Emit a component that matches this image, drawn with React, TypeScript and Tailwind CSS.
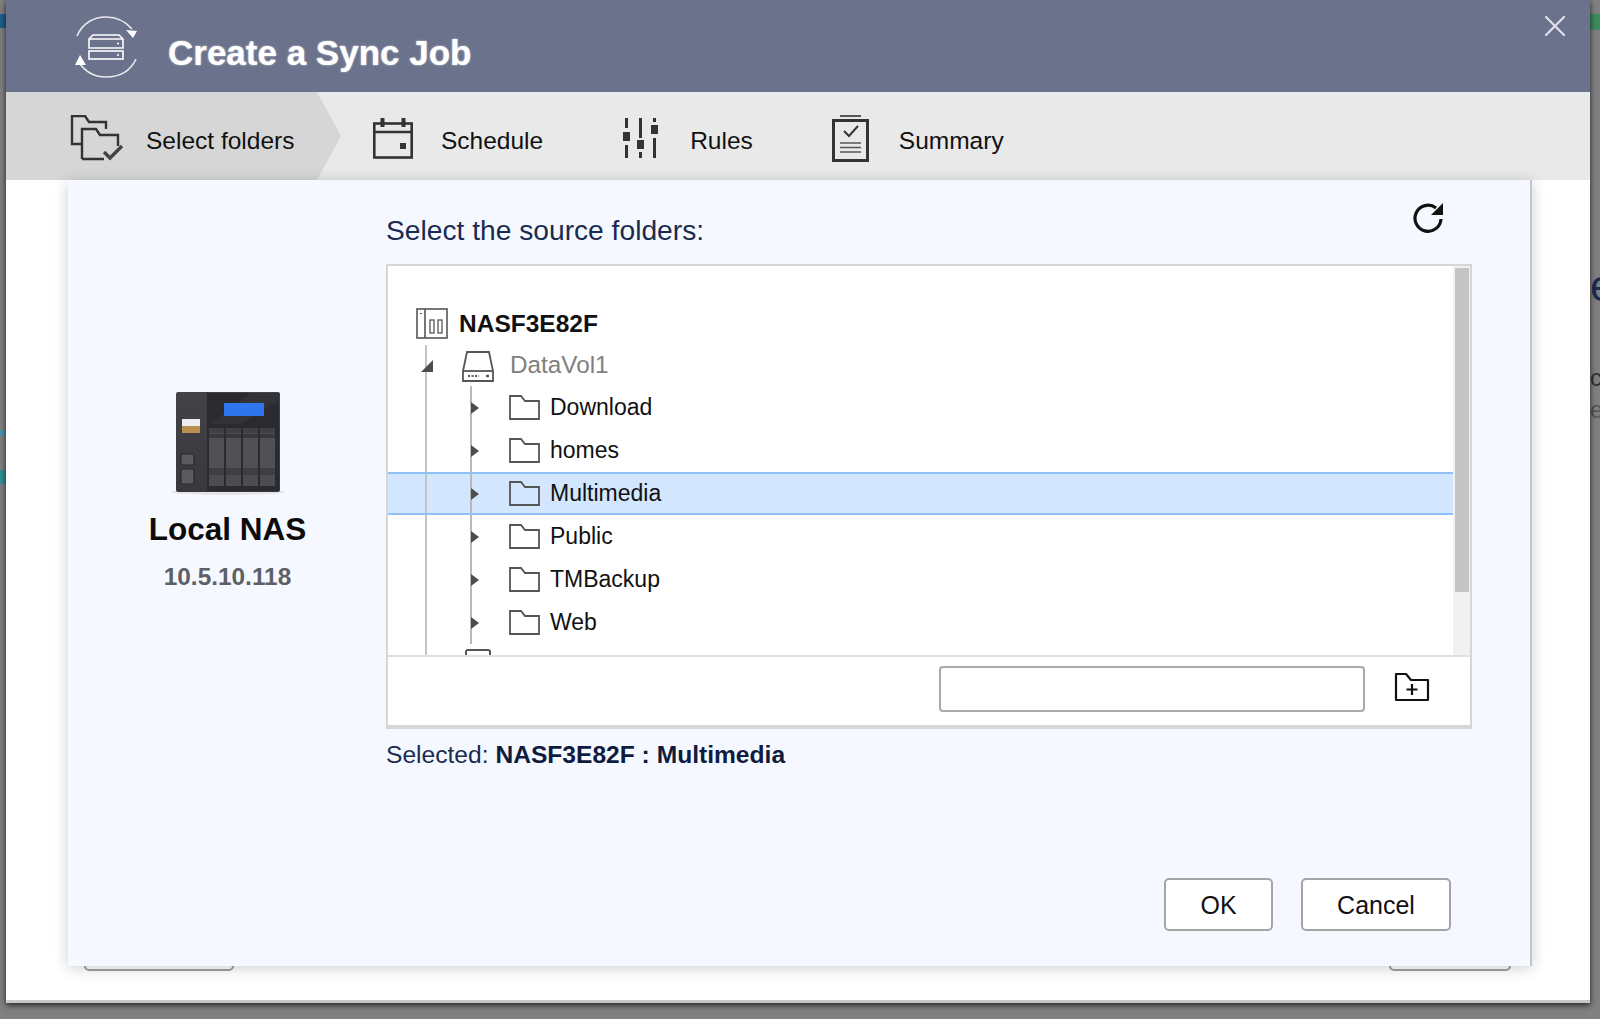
import { X } from "lucide-react";

const folders = ["Download", "homes", "Multimedia", "Public", "TMBackup", "Web"];
const selectedFolder = "Multimedia";

function SyncLogo() {
  return (
    <svg width="62" height="62" viewBox="0 0 62 62" fill="none" stroke="#fff" strokeWidth="1.6" className="mt-[2px] shrink-0">
      <path d="M2 20C8 6 20 1 31 1c11 0 20 5 26 12" strokeOpacity="0.85" />
      <path d="M58 22l-7-8 11 1z" fill="#fff" stroke="none" />
      <path d="M61 43C55 56 43 61 31 61 20 61 11 56 5 48" strokeOpacity="0.85" />
      <path d="M5 39l6 10-11 0z" fill="#fff" stroke="none" />
      <path d="M14 23l4-4h26l4 4v9H14z" />
      <path d="M14 23h34" />
      <rect x="14" y="35" width="34" height="8" />
      <path d="M42 27.500h2M42 39h2" />
    </svg>
  );
}

function SelectFoldersIcon() {
  return (
    <svg width="54" height="46" viewBox="0 0 54 46" fill="none" stroke="#333" strokeWidth="2.4" className="shrink-0">
      <path d="M12 29H2V1h13l4 6h17v7" />
      <path d="M12 44V14h14l4 6h18v11" />
      <path d="M12 44h22" />
      <path d="M34 37l6 6 12-12" strokeWidth="3.4" stroke="#444" />
    </svg>
  );
}

function ScheduleIcon() {
  return (
    <svg width="40" height="41" viewBox="0 0 40 41" fill="none" stroke="#333" strokeWidth="2.6" className="shrink-0">
      <rect x="1.300" y="5.500" width="37.400" height="34" />
      <path d="M1 14h38" />
      <path d="M9.500 0v9M30.500 0v9" strokeWidth="4" />
      <rect x="27" y="25" width="6" height="6" fill="#333" stroke="none" />
    </svg>
  );
}

function RulesIcon() {
  return (
    <svg width="37" height="40" viewBox="0 0 37 40" fill="#333" className="shrink-0">
      <rect x="2" y="0" width="3" height="10" />
      <rect x="0" y="14" width="7" height="9" />
      <rect x="2" y="27" width="3" height="13" />
      <rect x="16" y="0" width="3" height="20" />
      <rect x="14" y="22" width="7" height="9" />
      <rect x="16" y="34" width="3" height="6" />
      <rect x="30" y="0" width="3" height="4" />
      <rect x="28" y="7" width="7" height="9" />
      <rect x="30" y="20" width="3" height="20" />
    </svg>
  );
}

function SummaryIcon() {
  return (
    <svg width="37" height="47" viewBox="0 0 37 47" fill="none" stroke="#333" className="shrink-0">
      <path d="M8 1h21" strokeWidth="2" stroke="#555" />
      <rect x="1.500" y="5.500" width="34" height="40" strokeWidth="3" />
      <path d="M12 16l5 5 9-10" strokeWidth="2" />
      <path d="M8 28h21M8 32.500h21M8 37h21" strokeWidth="1.6" stroke="#555" />
    </svg>
  );
}

function RefreshIcon() {
  return (
    <svg width="32" height="32" viewBox="0 0 32 32" fill="none" className="shrink-0">
      <path d="M28 17a13 13 0 1 1-5-11" stroke="#111" strokeWidth="3.2" />
      <path d="M30 1v12H18z" fill="#111" />
    </svg>
  );
}

function NasServerIcon() {
  return (
    <svg width="32" height="32" viewBox="0 0 32 32" fill="none" stroke="#555" strokeWidth="1.6" className="shrink-0">
      <rect x="1" y="1" width="30" height="29" />
      <path d="M9 1v29" />
      <path d="M5 5v1" strokeWidth="2" />
      <rect x="14" y="12" width="4" height="13" strokeWidth="1.3" />
      <rect x="22" y="12" width="4" height="13" strokeWidth="1.3" />
    </svg>
  );
}

function DriveIcon() {
  return (
    <svg width="32" height="32" viewBox="0 0 32 32" fill="none" stroke="#555" strokeWidth="1.8" className="shrink-0">
      <path d="M1 21L5 2h22l4 19v10H1z" />
      <path d="M1 21h30" />
      <path d="M6 26h11" strokeDasharray="2 1.500" />
      <path d="M24 26h3" strokeWidth="2.400" />
    </svg>
  );
}

function FolderIcon() {
  return (
    <svg width="31" height="25" viewBox="0 0 31 25" fill="none" stroke="#555" strokeWidth="1.8" className="shrink-0">
      <path d="M1 24V1h11l4 5h14v18z" />
    </svg>
  );
}

function NewFolderIcon() {
  return (
    <svg width="36" height="30" viewBox="0 0 36 30" fill="none" stroke="#111" strokeWidth="2.2" className="shrink-0">
      <path d="M2 28V2h10l5 6h17v20z" strokeLinejoin="round" />
      <path d="M18 12v11M12.500 17.500h11" />
    </svg>
  );
}

function NasDevice() {
  return (
    <svg width="116" height="104" viewBox="0 0 116 104" className="shrink-0">
      <defs>
        <linearGradient id="nas-body" x1="0" y1="0" x2="0" y2="1">
          <stop offset="0" stopColor="#424248" />
          <stop offset="1" stopColor="#38383d" />
        </linearGradient>
      </defs>
      <ellipse cx="58" cy="100" rx="57" ry="3" fill="#e3e5e8" />
      <rect x="6" y="0" width="104" height="100" rx="2" fill="url(#nas-body)" />
      <path d="M37 1h71a1 1 0 0 1 1 1v97H37z" fill="#2a2a2f" />
      <path d="M80 1h28l1 1v7L70 32H40z" fill="#323237" />
      <rect x="54" y="11" width="40" height="13" fill="#2f76ee" />
      <rect x="12" y="27" width="18" height="7" fill="#eeeeec" />
      <rect x="12" y="34" width="18" height="7" fill="#b98e4e" />
      <rect x="11" y="62" width="13" height="11" rx="1.500" fill="#5a5a60" stroke="#29292d" strokeWidth="1.2" />
      <rect x="11" y="77" width="13" height="15" rx="1.500" fill="#5a5a60" stroke="#29292d" strokeWidth="1.2" />
      {[39, 56, 73, 90].map((x) => (
        <g key={x}>
          <rect x={x} y="36" width="15" height="58" fill="#4c4c52" />
          <rect x={x} y="36" width="15" height="5" fill="#3f3f44" />
          <rect x={x} y="46" width="15" height="30" fill="#505056" />
          <rect x={x} y="76" width="15" height="7" fill="#3e3e43" />
          <rect x={x} y="42" width="15" height="4" fill="#38383d" />
        </g>
      ))}
    </svg>
  );
}

function TreeRow({ name, selected }: { name: string; selected: boolean }) {
  return (
    <div
      className={
        selected
          ? "flex h-[43px] shrink-0 items-stretch border-y-2 border-y-[#8fc1f7] bg-[#d2e6fd]"
          : "flex h-[43px] shrink-0 items-stretch"
      }
    >
      <div className="w-[37px] shrink-0" />
      <div className="w-[45px] shrink-0 border-l-2 border-l-[#c4c4c4]" />
      <div className="flex w-[39px] shrink-0 items-center border-l-2 border-l-[#b9b9b9]">
        <span className="-ml-[1px] h-0 w-0 border-y-[6px] border-l-[8px] border-y-transparent border-l-[#4d4d4d]" />
      </div>
      <div className="flex items-center gap-[10px]">
        <FolderIcon />
        <span className="text-[23px] text-[#111]">{name}</span>
      </div>
    </div>
  );
}

function FolderTree() {
  return (
    <div className="flex h-[465px] w-[1086px] flex-col border-x-2 border-t-2 border-b-4 border-[#d6d6d6] bg-white">
      <div className="flex min-h-0 flex-1">
        <div className="flex min-w-0 flex-1 flex-col overflow-hidden pt-[37px]">
          <div className="flex h-[42px] shrink-0 items-center pl-[28px]">
            <NasServerIcon />
            <span className="ml-[11px] text-[24.500px] font-bold text-[#111]">NASF3E82F</span>
          </div>
          <div className="flex h-[41px] shrink-0 items-stretch">
            <div className="w-[37px] shrink-0" />
            <div className="relative flex items-center border-l-2 border-l-[#c4c4c4] pl-[35px]">
              <span className="absolute -left-[6px] top-[15px] h-0 w-0 border-b-[12px] border-l-[12px] border-b-[#4d4d4d] border-l-transparent" />
              <DriveIcon />
              <span className="ml-[16px] text-[24.300px] text-[#808080]">DataVol1</span>
            </div>
          </div>
          {folders.map((name) => (
            <TreeRow key={name} name={name} selected={name === selectedFolder} />
          ))}
          <div className="flex h-[16px] shrink-0 items-stretch">
            <div className="w-[37px] shrink-0" />
            <div className="w-[40px] shrink-0 border-l-2 border-l-[#c4c4c4]" />
            <div className="mt-[5px] h-[11px] w-[26px] rounded-t-[3px] border-x-2 border-t-2 border-[#555]" />
          </div>
        </div>
        <div className="w-[17px] shrink-0 bg-[#f1f1f1] pl-[2px] pt-[2px]">
          <div className="h-[324px] w-[14px] bg-[#c4c4c4]" />
        </div>
      </div>
      <div className="flex h-[70px] shrink-0 items-center border-t-2 border-t-[#e0e0e0] pb-[4px] pl-[551px]">
        <input className="h-[46px] w-[426px] rounded-[4px] border-2 border-[#a9a9a9] bg-white" />
        <span className="mb-[4px] ml-[29px] flex">
          <NewFolderIcon />
        </span>
      </div>
    </div>
  );
}

export default function App() {
  return (
    <div className="relative h-[1019px] w-[1600px] overflow-hidden bg-[#808082] [font-family:'Liberation_Sans',Arial,sans-serif]">
      {/* bits of the page behind the dialog */}
      <div className="absolute left-0 top-[14px] h-[14px] w-[6px] bg-[#1f5f8f]" />
      <div className="absolute left-0 top-[430px] h-[6px] w-[6px] bg-[#4f93ad]" />
      <div className="absolute left-0 top-[470px] h-[14px] w-[6px] bg-[#2f8f96]" />
      <div className="absolute right-0 top-[14px] h-[16px] w-[10px] bg-[#3f8a5f]" />
      <div className="absolute right-0 top-[262px] h-[170px] w-[10px] overflow-hidden">
        <span className="absolute left-0 top-[2px] text-[44px] leading-[44px] text-[#1c2b4f]">e</span>
        <span className="absolute left-0 top-[104px] text-[24px] leading-[24px] text-[#333]">c</span>
        <span className="absolute left-0 top-[136px] text-[24px] leading-[24px] text-[#555]">e</span>
      </div>

      <div className="relative ml-[6px] flex h-[1003px] w-[1584px] flex-col border-b-[3px] border-b-[#c8c8c8] bg-white shadow-[0_2px_6px_rgba(0,0,0,0.75)]">
        <header className="flex h-[92px] shrink-0 items-center bg-[#6b728c] pl-[69px]">
          <SyncLogo />
          <h1 className="ml-[31px] mt-[14px] text-[35px] font-bold text-white [text-shadow:0_0_2px_rgba(255,255,255,0.8)]">
            Create a Sync Job
          </h1>
          <X className="absolute right-[17px] top-[8px] h-[36px] w-[36px] text-[#dfe1e8]" strokeWidth={1.5} />
        </header>

        <nav className="flex h-[88px] shrink-0 items-center bg-[#e9e9e9] text-[24.500px] text-[#111]">
          <div className="flex h-full w-[335px] shrink-0 items-center bg-[#d6d6d6] pl-[64px] pt-[4px] [clip-path:polygon(0_0,311px_0,335px_50%,311px_100%,0_100%)]">
            <SelectFoldersIcon />
            <span className="ml-[22px] pt-[6px]">Select folders</span>
          </div>
          <div className="ml-[32px] flex items-center pt-[4px]">
            <ScheduleIcon />
            <span className="ml-[28px] pt-[6px]">Schedule</span>
          </div>
          <div className="ml-[80px] flex items-center pt-[4px]">
            <RulesIcon />
            <span className="ml-[30px] pt-[6px]">Rules</span>
          </div>
          <div className="ml-[79px] flex items-center pt-[4px]">
            <SummaryIcon />
            <span className="ml-[30px] pt-[6px]">Summary</span>
          </div>
        </nav>

        <div className="relative min-h-0 flex-1">
          {/* buttons of the page under the dialog */}
          <div className="absolute left-[78px] top-[770px] h-[21px] w-[150px] rounded-b-[5px] border-2 border-[#a0a0a0]" />
          <div className="absolute left-[1383px] top-[770px] h-[21px] w-[122px] rounded-b-[5px] border-2 border-[#a0a0a0]" />

          <main className="relative ml-[62px] flex h-[786px] w-[1464px] border-r-2 border-r-[#c2c6cf] bg-[#f5f8fe] shadow-[0_2px_14px_rgba(0,0,0,0.2)]">
            <section className="flex w-[318px] shrink-0 flex-col items-center pl-[1px] pt-[212px]">
              <NasDevice />
              <div className="mt-[11px] text-[31.500px] font-bold leading-[44px] text-[#0c0c0c]">Local NAS</div>
              <div className="mt-[10px] text-[24.400px] font-bold leading-[32px] text-[#5e6066]">10.5.10.118</div>
            </section>

            <section className="flex min-w-0 flex-1 flex-col">
              <div className="flex h-[84px] shrink-0 items-start justify-between">
                <h2 className="mt-[32px] text-[28.200px] leading-[36px] text-[#1a2b50]">Select the source folders:</h2>
                <span className="mr-[85px] mt-[22px]">
                  <RefreshIcon />
                </span>
              </div>
              <FolderTree />
              <p className="mt-[10px] text-[24.600px] leading-[32px] text-[#1a2b50]">
                Selected: <b className="text-[#0f1c3f]">NASF3E82F : Multimedia</b>
              </p>
              <div className="mt-[107px] flex justify-end gap-[28px] pr-[79px]">
                <button className="h-[53px] w-[109px] rounded-[5px] border-2 border-[#a5a5a5] bg-white pt-[2px] text-[25px] text-[#111]">
                  OK
                </button>
                <button className="h-[53px] w-[150px] rounded-[5px] border-2 border-[#a5a5a5] bg-white pt-[2px] text-[25px] text-[#111]">
                  Cancel
                </button>
              </div>
            </section>
          </main>
        </div>
      </div>
    </div>
  );
}
